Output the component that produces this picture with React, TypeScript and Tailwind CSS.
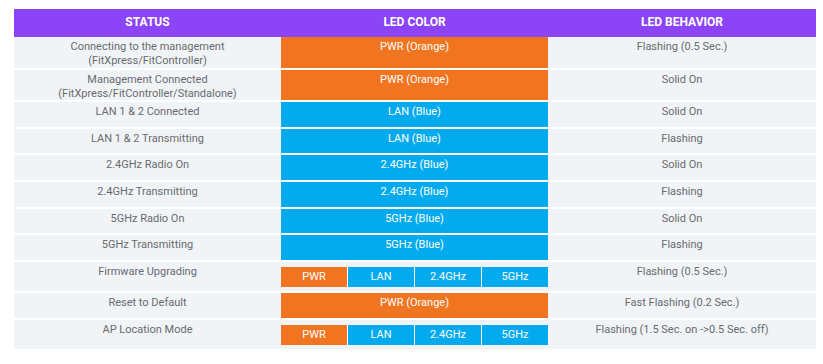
const ORANGE = 'bg-[#f17521]';
const BLUE = 'bg-[#03aaee]';

type Row = {
  status: string[];
  led: string | null;
  ledBg: string;
  behavior: string;
  h: string;
};

const ROWS: Row[] = [
  { status: ['Connecting to the management', '(FitXpress/FitController)'], led: 'PWR (Orange)', ledBg: ORANGE, behavior: 'Flashing (0.5 Sec.)', h: 'h-[31px]' },
  { status: ['Management Connected', '(FitXpress/FitController/Standalone)'], led: 'PWR (Orange)', ledBg: ORANGE, behavior: 'Solid On', h: 'h-[30px]' },
  { status: ['LAN 1 & 2 Connected'], led: 'LAN (Blue)', ledBg: BLUE, behavior: 'Solid On', h: 'h-[25px]' },
  { status: ['LAN 1 & 2 Transmitting'], led: 'LAN (Blue)', ledBg: BLUE, behavior: 'Flashing', h: 'h-[24px]' },
  { status: ['2.4GHz Radio On'], led: '2.4GHz (Blue)', ledBg: BLUE, behavior: 'Solid On', h: 'h-[25px]' },
  { status: ['2.4GHz Transmitting'], led: '2.4GHz (Blue)', ledBg: BLUE, behavior: 'Flashing', h: 'h-[25px]' },
  { status: ['5GHz Radio On'], led: '5GHz (Blue)', ledBg: BLUE, behavior: 'Solid On', h: 'h-[24px]' },
  { status: ['5GHz Transmitting'], led: '5GHz (Blue)', ledBg: BLUE, behavior: 'Flashing', h: 'h-[25px]' },
  { status: ['Firmware Upgrading'], led: null, ledBg: '', behavior: 'Flashing (0.5 Sec.)', h: 'h-[29px]' },
  { status: ['Reset to Default'], led: 'PWR (Orange)', ledBg: ORANGE, behavior: 'Fast Flashing (0.2 Sec.)', h: 'h-[25px]' },
  { status: ['AP Location Mode'], led: null, ledBg: '', behavior: 'Flashing (1.5 Sec. on ->0.5 Sec. off)', h: 'h-[29px]' },
];

const SPLIT = [
  { label: 'PWR', bg: ORANGE },
  { label: 'LAN', bg: BLUE },
  { label: '2.4GHz', bg: BLUE },
  { label: '5GHz', bg: BLUE },
];

export default function App() {
  return (
    <div className="w-[823px] h-[364px] bg-white pt-[9px] pl-[14px] font-['Roboto',sans-serif] text-[11px] leading-[13.5px]">
      <div className="w-[802px]">
        {/* header */}
        <div className="grid grid-cols-[267px_267px_268px] h-[28px] bg-[#8c45f6] text-white font-bold text-[12px] pb-[1px]">
          <div className="flex items-center justify-center">STATUS</div>
          <div className="flex items-center justify-center">LED COLOR</div>
          <div className="flex items-center justify-center">LED BEHAVIOR</div>
        </div>

        <div className="flex flex-col gap-[2px]">
          {ROWS.map((row, i) => (
            <div key={i} className={`grid grid-cols-[267px_267px_268px] ${row.h}`}>
              <div className="bg-[#f1f4f7] text-[#686b6e] text-center pt-[3px]">
                {row.status.map((line, j) => (
                  <div key={j}>{line}</div>
                ))}
              </div>

              {row.led ? (
                <div className={`${row.ledBg} text-white text-center pt-[3px]`}>{row.led}</div>
              ) : (
                <div className="bg-[#f1f4f7] pt-[5px] pb-[4px]">
                  <div className="grid grid-cols-4 gap-[1px] h-[20px] bg-white">
                    {SPLIT.map((s) => (
                      <div key={s.label} className={`${s.bg} text-white flex items-center justify-center`}>
                        {s.label}
                      </div>
                    ))}
                  </div>
                </div>
              )}

              <div className="bg-[#f1f4f7] text-[#686b6e] text-center pt-[3px]">{row.behavior}</div>
            </div>
          ))}
        </div>
      </div>
    </div>
  );
}
